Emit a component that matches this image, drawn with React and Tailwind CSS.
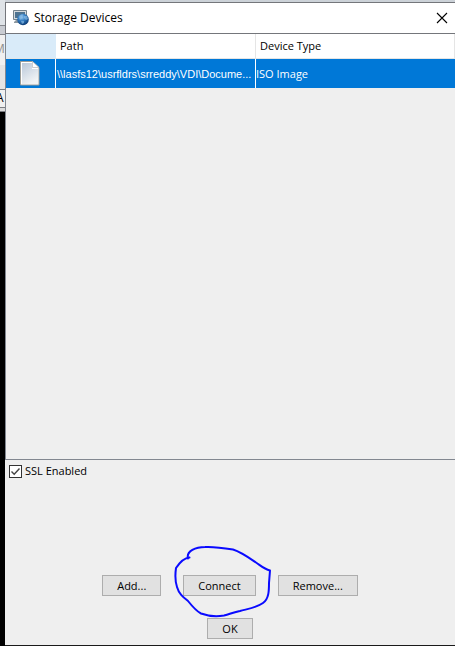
import React, { useState } from "react";

const devices = [
  { path: "\\\\lasfs12\\usrfldrs\\srreddy\\VDI\\Docume...", type: "ISO Image" },
];

function AppIcon() {
  return (
    <svg width="16" height="16" viewBox="0 0 16 16" aria-hidden="true">
      <defs>
        <radialGradient id="globe" cx="0.4" cy="0.3" r="0.7">
          <stop offset="0" stopColor="#8cc4f0" />
          <stop offset="0.5" stopColor="#2f78bd" />
          <stop offset="1" stopColor="#0b3a73" />
        </radialGradient>
      </defs>
      <path d="M0.5 0.5h13v9h-13z" fill="#d5dadd" stroke="#73828c" />
      <path d="M2 2h10v6H2z" fill="#4d7391" />
      <path d="M3 10h3v2h1v1H1v-1z" fill="#8d989f" />
      <circle cx="10" cy="9.5" r="5.8" fill="url(#globe)" />
      <path d="M6 7c1-2 3-3 4-2l-1 2 1 1-2 1-1 1zM11 6l3 0 1 3-2 1-2-2zM8 11l3 0 0 2-2 1z" fill="#8ebfe6" opacity="0.65" />
    </svg>
  );
}

function FileIcon() {
  return (
    <svg className="block" width="20" height="25" viewBox="0 0 20 25" aria-hidden="true">
      <defs>
        <linearGradient id="paper" x1="0" y1="0" x2="0.5" y2="1">
          <stop offset="0" stopColor="#b9c8da" />
          <stop offset="1" stopColor="#f0f3f5" />
        </linearGradient>
      </defs>
      <path d="M0.5 0.5h12l6.500 6v17.500h-18.500z" fill="#fff" stroke="#9a9c98" />
      <path d="M2 2h10v6h6v15H2z" fill="url(#paper)" />
      <path d="M12.500 0.500v6h6.500z" fill="#fff" stroke="#b4b8ba" strokeWidth="0.700" />
    </svg>
  );
}

function DialogButton({ children }) {
  return (
    <button
      type="button"
      className="h-[21px] px-3.5 border border-[#adadad] bg-[#e1e1e1] text-[11px] leading-4 whitespace-nowrap"
    >
      {children}
    </button>
  );
}

// sliver of the window behind the dialog
function Backdrop() {
  return (
    <div className="w-[5px] shrink-0 overflow-hidden bg-black" aria-hidden="true">
      <div className="h-[25px] bg-[#dfe3e7]" />
      <div className="h-2.5 border-y border-[#85878c] bg-[#c9ccd2]" />
      <div className="h-[30px] pt-1.5 bg-[#f0f0f0] text-xs text-[#8c8c8c] -indent-1.5">M</div>
      <div className="h-6 bg-[#e4e4e4]" />
      <div className="h-[19px] border-y border-[#7b7d82] bg-[#f0f0f0] text-xs leading-4 -indent-1">A</div>
      <div className="h-1 border-b border-[#7b7d82] bg-[#dcdcdc]" />
    </div>
  );
}

function App() {
  const [sslEnabled, setSslEnabled] = useState(true);

  return (
    <div className="flex min-h-screen bg-[#efefef] font-['Open_Sans',sans-serif] text-black">
      <Backdrop />
      <main className="flex flex-1 flex-col min-w-0 border-b border-[#1a1a1a]">
        <div className="h-0.5 bg-[#ccd2d8]" />
        <header className="flex h-8 items-center border-y border-l border-[#74767b] bg-white pl-[7px] pr-[7px]">
          <AppIcon />
          <h1 className="ml-[5px] flex-1 text-xs">Storage Devices</h1>
          <button type="button" aria-label="Close">
            <svg width="12" height="12" viewBox="0 0 12 12" fill="none" stroke="#000" strokeWidth="1.100">
              <path d="M1 1l10 10M11 1L1 11" />
            </svg>
          </button>
        </header>

        <section className="flex-1 border-b border-l border-[#828790]">
          <table className="w-full table-fixed border-separate border-spacing-0 text-left text-[11px] leading-4">
            <colgroup>
              <col className="w-[50px]" />
              <col className="w-[200px]" />
              <col />
            </colgroup>
            <thead>
              <tr className="h-[25px] bg-white">
                <th className="border-b border-[#e5e5e5] bg-[#d9ebf9]" aria-label="Icon"></th>
                <th className="border-r border-b border-[#e5e5e5] px-1 py-0 font-normal">Path</th>
                <th className="border-r border-b border-[#e5e5e5] px-1 py-0 font-normal">Device Type</th>
              </tr>
            </thead>
            <tbody>
              {devices.map((device) => (
                <tr key={device.path} className="h-[29px] bg-[#0078d7] text-white">
                  <td className="border-r border-white p-0 pl-3.5">
                    <FileIcon />
                  </td>
                  <td className="border-r border-white p-0 pl-px font-['Liberation_Sans',sans-serif] whitespace-nowrap">{device.path}</td>
                  <td className="p-0">{device.type}</td>
                </tr>
              ))}
            </tbody>
          </table>
        </section>

        <footer className="pb-1.5">
          <label className="flex h-[23px] items-center gap-[3px] pl-1 text-[11px]">
            <span className="relative flex">
              <input
                type="checkbox"
                checked={sslEnabled}
                onChange={(e) => setSslEnabled(e.target.checked)}
                className="size-[13px] appearance-none border border-[#333] bg-white"
              />
              {sslEnabled && (
                <svg className="pointer-events-none absolute inset-0" width="13" height="13" viewBox="0 0 13 13" fill="none" stroke="#444" strokeWidth="1.400">
                  <path d="M2.500 6.500l2.700 2.700 5.300-5.700" />
                </svg>
              )}
            </span>
            SSL Enabled
          </label>

          <div className="mt-[92px] flex justify-center gap-[22px]">
            <DialogButton>Add...</DialogButton>
            <div className="relative flex">
              <DialogButton>Connect</DialogButton>
              {/* pen mark around the button */}
              <svg
                className="pointer-events-none absolute -left-[13px] -top-[35px] max-w-none"
                width="104"
                height="80"
                viewBox="0 0 104 80"
                fill="none"
                stroke="#0a0aff"
                strokeWidth="2"
                strokeLinecap="round"
                strokeLinejoin="round"
              >
                <path d="M19.500 17.500C14 18 10 22 6 28C5 35 5 41 7 47C9 54 13 57 18 61C22 66 26 71 31 73.500C38 76 48 76.500 54 75.500C60 74 64 72 70 71C77 69 86 68 93 63C99 59 99 50 99 43L100 30.500C94 29 90 25 86 22.500C78 17 71 12 63 9.500C54 8 45 6.500 35 7C26 7 16 11 18 18.500" />
              </svg>
            </div>
            <DialogButton>Remove...</DialogButton>
          </div>
          <div className="mt-[22px] flex justify-center">
            <DialogButton>OK</DialogButton>
          </div>
        </footer>
      </main>
    </div>
  );
}

export default App;
